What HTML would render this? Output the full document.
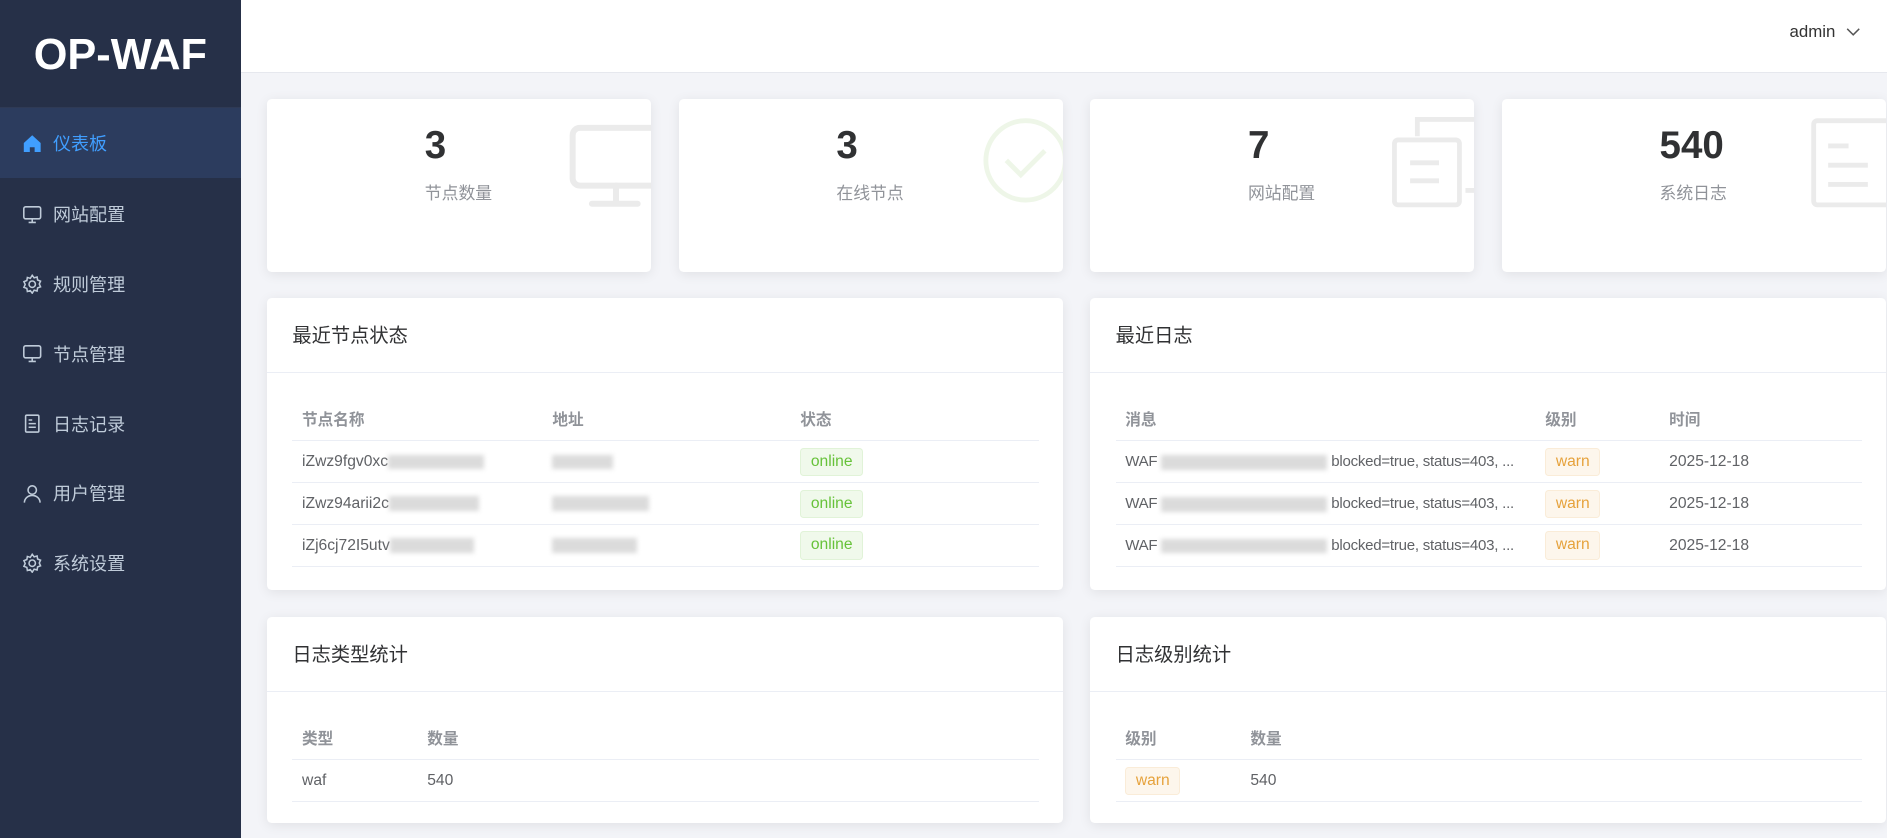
<!DOCTYPE html>
<html><head><meta charset="utf-8"><style>
html{zoom:1.20344}
body{margin:0;width:1568px;height:696px;overflow:hidden;background:#f3f4f8;font-family:"Liberation Sans","Noto Sans CJK SC",sans-serif;position:relative}
.side{position:absolute;left:0;top:0;width:200px;height:696px;background:#263048}
.logo{height:89px;line-height:92px;text-align:center;color:#fff;font-weight:bold;font-size:36px;border-bottom:1px solid #2f3a55}
.mi{position:absolute;left:0;width:200px;height:58px;display:flex;align-items:center;color:#bfcbd9;font-size:15px}
.mi svg{margin-left:18px;margin-right:9px}
.mi.act{background:#2c3c5e;color:#409eff}
.hdr{position:absolute;left:200px;top:0;right:0;height:60px;background:#fff;border-bottom:1px solid #e6e8ee}
.admin{position:absolute;right:22px;top:18px;font-size:14px;color:#333}
.card{position:absolute;background:#fff;border-radius:4px;box-shadow:0 2px 10px rgba(0,0,0,.08);overflow:hidden}
.num{position:absolute;font-weight:bold;font-size:32px;color:#303133}
.lbl{position:absolute;font-size:14px;color:#909399}
.ch{height:61px;border-bottom:1px solid #ebeef5;font-size:16px;color:#303133;line-height:64px;padding-left:21px}
table{border-collapse:collapse;position:absolute;left:21px;font-size:13px;color:#606266;white-space:nowrap}
th{text-align:left;font-weight:bold;color:#909399;height:36px;padding:0 8px;border-bottom:1px solid #ebeef5;font-size:13px}
td{height:34px;padding:0 8px;border-bottom:1px solid #ebeef5}
.tag{display:inline-block;height:22px;line-height:22px;padding:0 8px;border-radius:3px;font-size:13px}
.on{background:#f0f9eb;border:1px solid #e1f3d8;color:#67c23a}
.warn{background:#fdf6ec;border:1px solid #faecd8;color:#e6a23c}
.bl{display:inline-block;height:12px;background:#ccc;filter:blur(2px);vertical-align:middle;opacity:.7}
.msg{font-size:12.5px;letter-spacing:-.2px}
</style></head><body>
<div class="side">
<div class="logo">OP-WAF</div>
<div class="mi act" style="top:90px"><svg width="17" height="16" viewBox="0 0 16 16"><path d="M8 1L1 7.5V15h5v-4h4v4h5V7.5z" fill="#409eff"/></svg>仪表板</div>
<div class="mi" style="top:149px"><svg width="17" height="16" viewBox="0 0 16 16" fill="none" stroke="#bfcbd9" stroke-width="1.3"><rect x="1" y="1.5" width="14" height="10" rx="1.5"/><path d="M8 11.5v3M5 14.5h6"/></svg>网站配置</div>
<div class="mi" style="top:207px"><svg width="17" height="17" viewBox="0 0 16 16" fill="none" stroke="#bfcbd9" stroke-width="1.2"><circle cx="8" cy="8" r="2.5"/><path d="M8 1l1.5 2 2.3-.7.4 2.4 2.3.9-1 2.2 1 2.2-2.3.9-.4 2.4-2.3-.7L8 15l-1.5-2-2.3.7-.4-2.4-2.3-.9 1-2.2-1-2.2 2.3-.9.4-2.4 2.3.7z"/></svg>规则管理</div>
<div class="mi" style="top:265px"><svg width="17" height="16" viewBox="0 0 16 16" fill="none" stroke="#bfcbd9" stroke-width="1.3"><rect x="1" y="1.5" width="14" height="10" rx="1.5"/><path d="M8 11.5v3M5 14.5h6"/></svg>节点管理</div>
<div class="mi" style="top:323px"><svg width="17" height="16" viewBox="0 0 16 16" fill="none" stroke="#bfcbd9" stroke-width="1.3"><rect x="2.5" y="1" width="11" height="14" rx="1"/><path d="M5 5h3M5 8h6M5 11h6"/></svg>日志记录</div>
<div class="mi" style="top:381px"><svg width="17" height="16" viewBox="0 0 16 16" fill="none" stroke="#bfcbd9" stroke-width="1.3"><circle cx="8" cy="5" r="3.5"/><path d="M1.5 15.5c0-3.5 3-6 6.5-6s6.5 2.5 6.5 6"/></svg>用户管理</div>
<div class="mi" style="top:439px"><svg width="17" height="17" viewBox="0 0 16 16" fill="none" stroke="#bfcbd9" stroke-width="1.2"><circle cx="8" cy="8" r="2.5"/><path d="M8 1l1.5 2 2.3-.7.4 2.4 2.3.9-1 2.2 1 2.2-2.3.9-.4 2.4-2.3-.7L8 15l-1.5-2-2.3.7-.4-2.4-2.3-.9 1-2.2-1-2.2 2.3-.9.4-2.4 2.3.7z"/></svg>系统设置</div>
</div>
<div class="hdr"><div class="admin">admin <svg width="12" height="8" viewBox="0 0 12 8" style="margin-left:5px"><path d="M1 1.5l5 5 5-5" fill="none" stroke="#555" stroke-width="1.2"/></svg></div></div>

<div class="card" style="left:222px;top:82px;width:319px;height:144px">
<div class="num" style="left:131px;top:21px">3</div><div class="lbl" style="left:131px;top:67px">节点数量</div>
<svg style="position:absolute;left:0;top:0" width="319" height="144" fill="none" stroke="#ebebeb" stroke-width="5"><rect x="254" y="24" width="80" height="48" rx="6"/><path d="M290 72v14M270 87h38" stroke-linecap="round"/></svg></div>
<div class="card" style="left:564px;top:82px;width:319px;height:144px">
<div class="num" style="left:131px;top:21px">3</div><div class="lbl" style="left:131px;top:67px">在线节点</div>
<svg style="position:absolute;left:0;top:0" width="319" height="144" fill="none" stroke="#eef6e8" stroke-width="4"><circle cx="288" cy="51" r="33"/><path d="M272 51l12 12 20-20"/></svg></div>
<div class="card" style="left:906px;top:82px;width:319px;height:144px">
<div class="num" style="left:131px;top:21px">7</div><div class="lbl" style="left:131px;top:67px">网站配置</div>
<svg style="position:absolute;left:0;top:0" width="319" height="144" fill="none" stroke="#ebebeb" stroke-width="4"><path d="M272 31V17h50M312 76h8"/><rect x="253" y="34" width="54" height="54" rx="3"/><path d="M266 53h24M266 68h24"/></svg></div>
<div class="card" style="left:1248px;top:82px;width:319px;height:144px">
<div class="num" style="left:131px;top:21px">540</div><div class="lbl" style="left:131px;top:67px">系统日志</div>
<svg style="position:absolute;left:0;top:0" width="319" height="144" fill="none" stroke="#ebebeb" stroke-width="4"><rect x="259" y="18" width="70" height="70" rx="3"/><path d="M271 39h17M271 55h33M271 71h33"/></svg></div>

<div class="card" style="left:222px;top:248px;width:661px;height:242px"><div class="ch">最近节点状态</div>
<table style="top:82px;width:620px"><tr><th style="width:192px">节点名称</th><th style="width:190px">地址</th><th>状态</th></tr>
<tr><td>iZwz9fgv0xc<span class="bl" style="width:80px"></span></td><td><span class="bl" style="width:50px"></span></td><td><span class="tag on">online</span></td></tr>
<tr><td>iZwz94arii2c<span class="bl" style="width:75px"></span></td><td><span class="bl" style="width:80px"></span></td><td><span class="tag on">online</span></td></tr>
<tr><td>iZj6cj72I5utv<span class="bl" style="width:70px"></span></td><td><span class="bl" style="width:70px"></span></td><td><span class="tag on">online</span></td></tr></table></div>

<div class="card" style="left:906px;top:248px;width:661px;height:242px"><div class="ch">最近日志</div>
<table style="top:82px;width:620px"><tr><th style="width:333px">消息</th><th style="width:87px">级别</th><th>时间</th></tr>
<tr><td class="msg">WAF <span class="bl" style="width:138px"></span> blocked=true, status=403, ...</td><td><span class="tag warn">warn</span></td><td>2025-12-18</td></tr>
<tr><td class="msg">WAF <span class="bl" style="width:138px"></span> blocked=true, status=403, ...</td><td><span class="tag warn">warn</span></td><td>2025-12-18</td></tr>
<tr><td class="msg">WAF <span class="bl" style="width:138px"></span> blocked=true, status=403, ...</td><td><span class="tag warn">warn</span></td><td>2025-12-18</td></tr></table></div>

<div class="card" style="left:222px;top:513px;width:661px;height:171px"><div class="ch">日志类型统计</div>
<table style="top:82px;width:620px"><tr><th style="width:88px">类型</th><th>数量</th></tr><tr><td>waf</td><td>540</td></tr></table></div>

<div class="card" style="left:906px;top:513px;width:661px;height:171px"><div class="ch">日志级别统计</div>
<table style="top:82px;width:620px"><tr><th style="width:88px">级别</th><th>数量</th></tr><tr><td><span class="tag warn">warn</span></td><td>540</td></tr></table></div>
</body></html>
